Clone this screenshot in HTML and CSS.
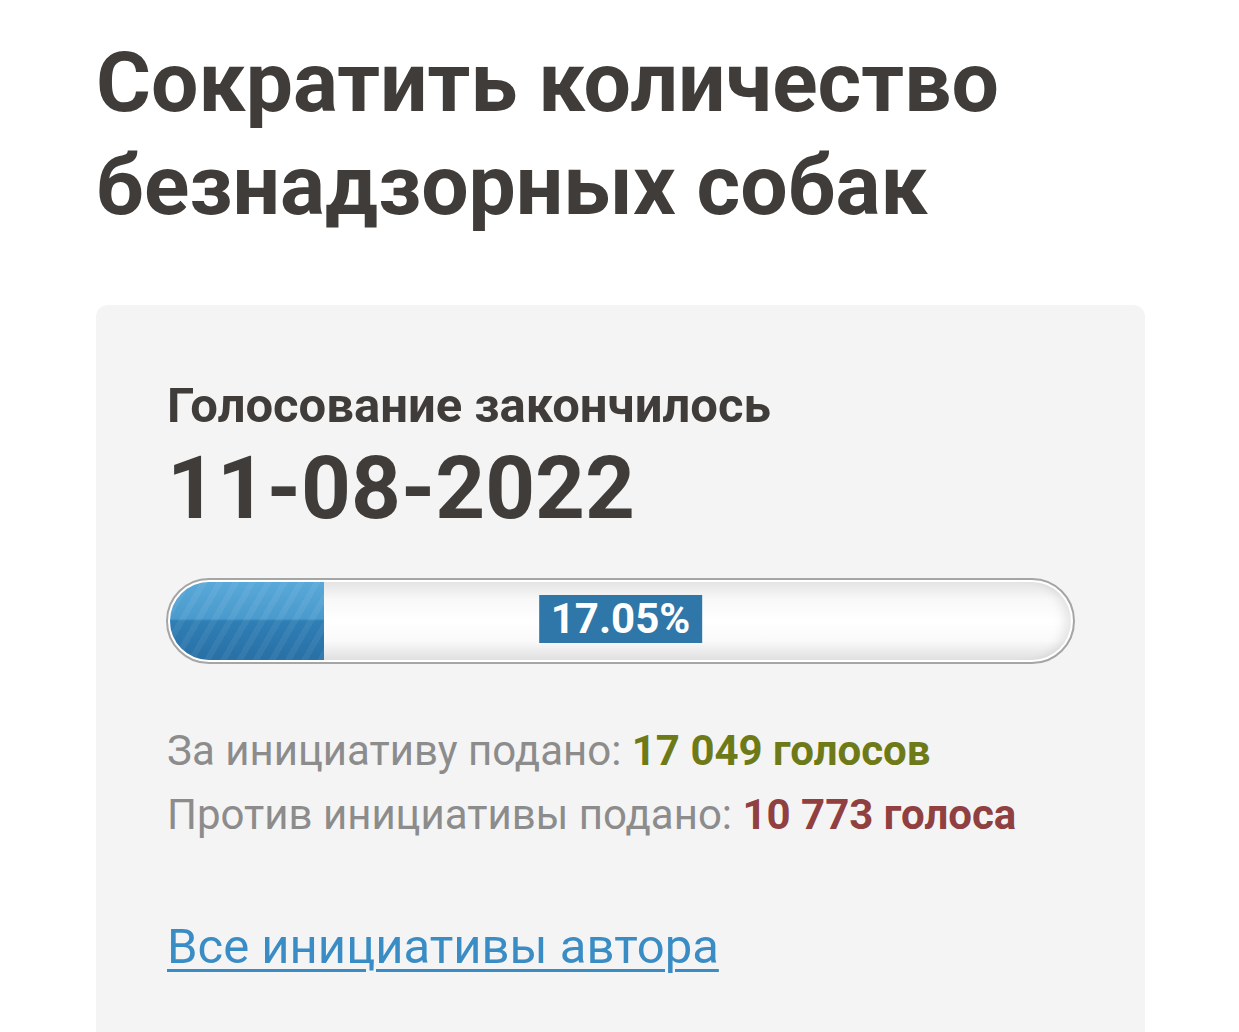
FILE: index.html
```html
<!DOCTYPE html>
<html lang="ru">
<head>
  <meta charset="UTF-8">
  <meta name="viewport" content="width=device-width, initial-scale=1.0">
  <title>Сократить количество безнадзорных собак</title>
  <link rel="stylesheet" href="styles.css">
</head>
<body>
  <div class="page">
    <h1 class="title">Сократить количество безнадзорных собак</h1>

    <!-- Voting result card -->
    <div class="card">
      <div class="status">Голосование закончилось</div>
      <div class="date">11-08-2022</div>

      <div class="progress">
        <div class="progress-track">
          <div class="progress-fill" style="width: 17.05%"></div>
          <span class="progress-label">17.05%</span>
        </div>
      </div>

      <p class="votes">За инициативу подано: <b class="votes-for">17 049 голосов</b></p>
      <p class="votes">Против инициативы подано: <b class="votes-against">10 773 голоса</b></p>

      <a class="author-link" href="#">Все инициативы автора</a>
    </div>
  </div>
</body>
</html>
```

FILE: styles.css
```css
/* Base */
body {
  margin: 0;
  padding: 0;
  background: #fff;
  font-family: Roboto, "Noto Sans", Arial, sans-serif;
  color: #3f3c3a;
}
.page {
  display: flex;
  flex-direction: column;
  min-height: 100vh;
  box-sizing: border-box;
  padding: 31px 94px 0 96px;
}
.title {
  margin: 0 0 68px;
  font-size: 84px;
  line-height: 103px;
  font-weight: 700;
  color: #3f3c3a;
  max-width: 1000px;
}
/* Card */
.card {
  flex: 1;
  background: #f4f4f4;
  border-radius: 12px 12px 0 0;
  padding: 73px 70px 0 71px;
}
.status {
  font-size: 49px;
  line-height: 56px;
  font-weight: 700;
}
.date {
  margin-top: 6px;
  font-size: 87px;
  line-height: 96px;
  font-weight: 700;
  margin-bottom: 42px;
}
/* Progress bar */
.progress {
  width: 901px;
  height: 78px;
  border: 2px solid #a5a5a5;
  border-radius: 45px;
  background: #fff;
  padding: 2px;
  margin-left: -1px;
}
.progress-track {
  position: relative;
  height: 100%;
  border-radius: 41px;
  overflow: hidden;
  background: linear-gradient(#e4e4e4, #f8f8f8 22%, #fff 50%, #fafafa 75%, #e0e0e0);
  box-shadow: inset 16px 0 12px -10px rgba(0, 0, 0, 0.1), inset -16px 0 12px -10px rgba(0, 0, 0, 0.1);
}
.progress-fill {
  height: 100%;
  background:
    repeating-linear-gradient(-60deg, rgba(255, 255, 255, 0.06) 0 6px, transparent 6px 14px),
    linear-gradient(#58a8d8, #4a9acd 47%, #2f7eb5 50%, #2870a6);
}
.progress-label {
  position: absolute;
  top: 13px;
  left: 50%;
  transform: translateX(-50%);
  padding: 0 12px;
  height: 48px;
  line-height: 48px;
  background: #2f77a8;
  color: #fff;
  font-size: 42px;
  font-weight: 700;
}
/* Votes */
.votes {
  margin: 0;
  font-size: 42px;
  line-height: 64px;
  color: #8c8c8c;
}
.votes:first-of-type {
  margin-top: 55px;
}
.votes-for {
  color: #6e7a17;
}
.votes-against {
  color: #904040;
}
.author-link {
  display: inline-block;
  margin-top: 72px;
  font-size: 49px;
  line-height: 56px;
  color: #3a8dc4;
  text-decoration: underline;
  text-decoration-thickness: 3px;
  text-underline-offset: 6px;
}
```
